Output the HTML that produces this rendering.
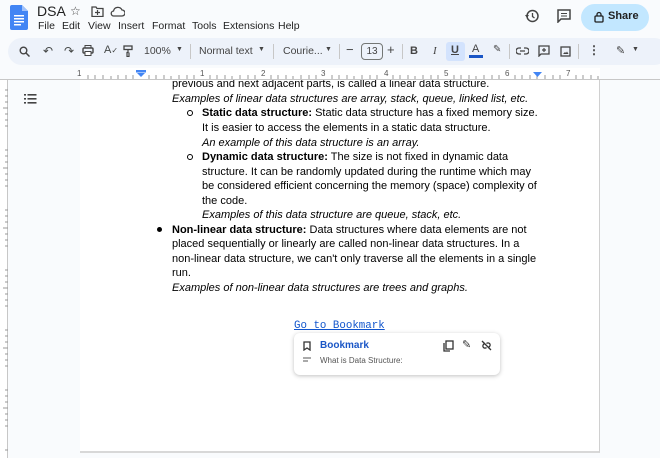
<!DOCTYPE html>
<html><head><meta charset="utf-8"><style>
*{margin:0;padding:0;box-sizing:border-box}
body{width:660px;height:458px;overflow:hidden;background:#f9fbfd;font-family:"Liberation Sans",Arial,sans-serif;position:relative;color:#1f1f1f}
.a{position:absolute;white-space:nowrap}
.tb{position:absolute;left:8px;top:38px;width:660px;height:27px;background:#edf2fa;border-radius:14px}
.ic{position:absolute;font-size:12px;color:#444746}
.doc{font-size:11px;color:#000;line-height:14.6px}
.i{font-style:italic}
.sep{position:absolute;top:44px;width:1px;height:15px;background:#c7c7c7}
.m{position:absolute;top:20px;font-size:10.5px;color:#1f1f1f}
</style></head><body>
<!-- header -->
<svg class="a" style="left:10px;top:5px" width="18" height="25" viewBox="0 0 18 25"><path d="M0 2a2 2 0 0 1 2-2h10l6 6v17a2 2 0 0 1-2 2H2a2 2 0 0 1-2-2z" fill="#4285f4"/><path d="M12 0v6h6z" fill="#a1c2fa"/><rect x="4" y="10" width="10" height="1.5" fill="#fff"/><rect x="4" y="13" width="10" height="1.5" fill="#fff"/><rect x="4" y="16" width="10" height="1.5" fill="#fff"/><rect x="4" y="19" width="7" height="1.5" fill="#fff"/></svg>
<div class="a" style="left:37px;top:3px;font-size:14px;color:#1f1f1f">DSA</div>
<div class="a" style="left:70px;top:4px;font-size:12px;color:#444">☆</div>
<svg class="a" style="left:91px;top:6px" width="13" height="11"><path d="M1 1h4l1 1.5h6v8H1z" fill="none" stroke="#444" stroke-width="1.3"/><path d="M6.5 4v5M4 6.5h5" stroke="#444" stroke-width="1.2"/></svg>
<svg class="a" style="left:110px;top:6px" width="15" height="11"><path d="M4 10h8a3 3 0 0 0 0-6 4.5 4.5 0 0 0-8.5 1A2.5 2.5 0 0 0 4 10z" fill="none" stroke="#444" stroke-width="1.3"/></svg>
<div class="m" style="left:38px">File</div>
<div class="m" style="left:62px">Edit</div>
<div class="m" style="left:88px">View</div>
<div class="m" style="left:118px">Insert</div>
<div class="m" style="left:152px">Format</div>
<div class="m" style="left:192px">Tools</div>
<div class="m" style="left:223px">Extensions</div>
<div class="m" style="left:278px">Help</div>
<svg class="a" style="left:525px;top:9px" width="14" height="14"><circle cx="7.5" cy="7" r="5.5" fill="none" stroke="#444" stroke-width="1.5"/><path d="M7.5 4v3.5l2 1.5" stroke="#444" stroke-width="1.3" fill="none"/><path d="M0 6l2 3 2-3z" fill="#444"/></svg>
<svg class="a" style="left:557px;top:9px" width="14" height="14"><path d="M1 1h12v9H4l-3 3z" fill="none" stroke="#444" stroke-width="1.5"/><path d="M4 4.5h6M4 7h6" stroke="#444"/></svg>
<div class="a" style="left:581px;top:4px;width:68px;height:27px;border-radius:14px;background:#c2e7ff"></div>
<svg class="a" style="left:594px;top:11px" width="10" height="12"><rect x="1" y="5" width="8" height="6" rx="1" fill="none" stroke="#1f1f1f" stroke-width="1.3"/><path d="M3 5V3.5a2 2 0 0 1 4 0V5" fill="none" stroke="#1f1f1f" stroke-width="1.3"/></svg>
<div class="a" style="left:608px;top:10px;font-size:11px;font-weight:bold;color:#1f1f1f">Share</div>
<!-- toolbar -->
<div class="tb"></div>
<svg class="a" style="left:19px;top:46px" width="11" height="11"><circle cx="4.5" cy="4.5" r="3.3" fill="none" stroke="#444" stroke-width="1.4"/><path d="M7 7l3.5 3.5" stroke="#444" stroke-width="1.5"/></svg>
<div class="ic a" style="left:43px;top:44px">↶</div>
<div class="ic a" style="left:64px;top:44px">↷</div>
<svg class="a" style="left:82px;top:45px" width="12" height="11"><rect x="1" y="3" width="10" height="5" rx="1" fill="none" stroke="#444" stroke-width="1.4"/><rect x="3" y="0.5" width="6" height="2.5" fill="none" stroke="#444"/><rect x="3" y="6.5" width="6" height="4" fill="#fff" stroke="#444"/></svg>
<div class="ic a" style="left:104px;top:44px;font-size:11px">A<span style="font-size:8px">✓</span></div>
<svg class="a" style="left:123px;top:45px" width="10" height="12"><rect x="1" y="1" width="8" height="3.5" fill="none" stroke="#444" stroke-width="1.3"/><path d="M5 4.5v3h-1v4h2v-4" fill="none" stroke="#444" stroke-width="1.2"/></svg>
<div class="a" style="left:144px;top:45px;font-size:10.5px;color:#444">100%</div>
<div class="a" style="left:176px;top:46px;font-size:7px;color:#444">▼</div>
<div class="sep" style="left:190px"></div>
<div class="a" style="left:199px;top:45px;font-size:10.5px;color:#444">Normal text</div>
<div class="a" style="left:258px;top:46px;font-size:7px;color:#444">▼</div>
<div class="sep" style="left:273px"></div>
<div class="a" style="left:283px;top:45px;font-size:10.5px;color:#444">Courie...</div>
<div class="a" style="left:325px;top:46px;font-size:7px;color:#444">▼</div>
<div class="sep" style="left:339px"></div>
<div class="a" style="left:346px;top:42px;font-size:13px;color:#444">−</div>
<div class="a" style="left:361px;top:43px;width:22px;height:17px;border:1px solid #747775;border-radius:4px;font-size:10px;text-align:center;line-height:15px;color:#444">13</div>
<div class="a" style="left:387px;top:42px;font-size:13px;color:#444">+</div>
<div class="sep" style="left:402px"></div>
<div class="a" style="left:410px;top:45px;font-size:11px;font-weight:bold;color:#444">B</div>
<div class="a" style="left:433px;top:45px;font-size:11px;font-style:italic;font-family:'Liberation Serif',serif;color:#444">I</div>
<div class="a" style="left:446px;top:42px;width:19px;height:19px;border-radius:3px;background:#d3e3fd"></div>
<div class="a" style="left:451px;top:44px;font-size:11px;text-decoration:underline;color:#444;font-weight:bold">U</div>
<div class="a" style="left:472px;top:43px;font-size:11px;color:#444">A</div>
<div class="a" style="left:469px;top:55px;width:14px;height:3px;background:#1a56c6"></div>
<div class="a" style="left:493px;top:44px;font-size:10px;color:#444">✎</div>
<div class="sep" style="left:509px"></div>
<svg class="a" style="left:516px;top:47px" width="13" height="8"><path d="M5 1H3a3 3 0 0 0 0 6h2M8 1h2a3 3 0 0 1 0 6H8M4 4h5" fill="none" stroke="#444" stroke-width="1.3"/></svg>
<svg class="a" style="left:538px;top:45px" width="12" height="12"><path d="M1 1h10v8H3l-2 2z" fill="none" stroke="#444" stroke-width="1.3"/><path d="M6 3v4M4 5h4" stroke="#444" stroke-width="1.2"/></svg>
<svg class="a" style="left:560px;top:46px" width="11" height="11"><rect x="1" y="1" width="9" height="9" fill="none" stroke="#444" stroke-width="1.3"/><path d="M3 8l2-2 1 1 1-1.5 1.5 2.5z" fill="#444"/></svg>
<div class="sep" style="left:578px"></div>
<div class="a" style="left:588px;top:43px;font-size:12px;color:#444;font-weight:bold">⋮</div>
<div class="a" style="left:616px;top:44px;font-size:11px;color:#444">✎</div>
<div class="a" style="left:632px;top:46px;font-size:7px;color:#444">▼</div>
<!-- ruler -->
<div class="a" style="left:0;top:79px;width:660px;height:1px;background:#c7c7c7"></div>
<div class="a" style="left:80px;top:68px;width:520px;height:11px;background:#fff"></div>
<div class="a" style="left:77px;top:69px;font-size:8px;color:#555">1</div>
<div class="a" style="left:200px;top:69px;font-size:8px;color:#555">1</div>
<div class="a" style="left:261px;top:69px;font-size:8px;color:#555">2</div>
<div class="a" style="left:321px;top:69px;font-size:8px;color:#555">3</div>
<div class="a" style="left:384px;top:69px;font-size:8px;color:#555">4</div>
<div class="a" style="left:444px;top:69px;font-size:8px;color:#555">5</div>
<div class="a" style="left:505px;top:69px;font-size:8px;color:#555">6</div>
<div class="a" style="left:566px;top:69px;font-size:8px;color:#555">7</div>
<svg class="a" style="left:80px;top:74px" width="520" height="5"><g stroke="#999" stroke-width="1"><path d="M8 1v4M15 1v4M23 1v4M31 2v3M38 1v4M46 1v4M53 1v4M69 1v4M76 1v4M84 1v4M91 2v3M99 1v4M107 1v4M114 1v4M130 1v4M137 1v4M145 1v4M152 2v3M160 1v4M168 1v4M175 1v4M191 1v4M198 1v4M206 1v4M213 2v3M221 1v4M229 1v4M236 1v4M252 1v4M259 1v4M267 1v4M274 2v3M282 1v4M290 1v4M297 1v4M313 1v4M320 1v4M328 1v4M335 2v3M343 1v4M351 1v4M358 1v4M374 1v4M381 1v4M389 1v4M396 2v3M404 1v4M412 1v4M419 1v4M435 1v4M442 1v4M450 1v4M457 2v3M465 1v4M473 1v4M480 1v4M496 1v4M503 1v4M511 1v4M518 2v3"/></g></svg>
<svg class="a" style="left:136px;top:70px" width="10" height="8"><rect x="0" y="0" width="10" height="2.5" fill="#4285f4"/><path d="M1 3h8l-4 4z" fill="#4285f4"/></svg>
<svg class="a" style="left:533px;top:72px" width="9" height="6"><path d="M0 0h9l-4.5 5z" fill="#4285f4"/></svg>
<!-- vertical ruler -->
<div class="a" style="left:0;top:80px;width:8px;height:378px;background:#fff;border-right:1px solid #c7c7c7"></div>
<svg class="a" style="left:2px;top:84px" width="6" height="374"><g stroke="#999"><path d="M3 6h3M3 12h3M3 18h3M1 24h5M3 30h3M3 36h3M3 42h3M3 66h3M3 72h3M3 78h3M1 84h5M3 90h3M3 96h3M3 102h3M3 126h3M3 132h3M3 138h3M1 144h5M3 150h3M3 156h3M3 162h3M3 186h3M3 192h3M3 198h3M1 204h5M3 210h3M3 216h3M3 222h3M3 246h3M3 252h3M3 258h3M1 264h5M3 270h3M3 276h3M3 282h3M3 306h3M3 312h3M3 318h3M1 324h5M3 330h3M3 336h3M3 342h3M3 366h3"/></g></svg>
<!-- outline icon -->
<svg class="a" style="left:24px;top:94px" width="13" height="10"><g fill="#444"><rect x="0" y="0" width="2" height="1.6"/><rect x="0" y="4" width="2" height="1.6"/><rect x="0" y="8" width="2" height="1.6"/><rect x="3.5" y="0" width="9" height="1.6"/><rect x="3.5" y="4" width="9" height="1.6"/><rect x="3.5" y="8" width="9" height="1.6"/></g></svg>
<!-- page -->
<div class="a" style="left:80px;top:80px;width:520px;height:373px;background:#fff;border-right:1px solid #d0d0d0;border-bottom:2px solid #d8d8d8"></div>
<div class="a" style="left:80px;top:80px;width:520px;height:1px;"></div>
<div style="position:absolute;left:80px;top:80px;width:520px;height:20px;overflow:hidden">
<div class="a doc" style="left:92px;top:-3px">previous and next adjacent parts, is called a linear data structure.</div>
</div>
<div class="a doc i" style="left:172px;top:92px">Examples of linear data structures are array, stack, queue, linked list, etc.</div>
<div class="a" style="left:187px;top:110px;width:6px;height:6px;border:1px solid #000;border-radius:50%"></div>
<div class="a doc" style="left:202px;top:106px"><b>Static data structure:</b> Static data structure has a fixed memory size.</div>
<div class="a doc" style="left:202px;top:121px">It is easier to access the elements in a static data structure.</div>
<div class="a doc i" style="left:202px;top:136px">An example of this data structure is an array.</div>
<div class="a" style="left:187px;top:154px;width:6px;height:6px;border:1px solid #000;border-radius:50%"></div>
<div class="a doc" style="left:202px;top:150px"><b>Dynamic data structure:</b> The size is not fixed in dynamic data</div>
<div class="a doc" style="left:202px;top:165px">structure. It can be randomly updated during the runtime which may</div>
<div class="a doc" style="left:202px;top:179px">be considered efficient concerning the memory (space) complexity of</div>
<div class="a doc" style="left:202px;top:194px">the code.</div>
<div class="a doc i" style="left:202px;top:208px">Examples of this data structure are queue, stack, etc.</div>
<div class="a" style="left:157px;top:227px;width:5px;height:5px;background:#000;border-radius:50%"></div>
<div class="a doc" style="left:172px;top:223px"><b>Non-linear data structure:</b> Data structures where data elements are not</div>
<div class="a doc" style="left:172px;top:237px">placed sequentially or linearly are called non-linear data structures. In a</div>
<div class="a doc" style="left:172px;top:252px">non-linear data structure, we can't only traverse all the elements in a single</div>
<div class="a doc" style="left:172px;top:266px">run.</div>
<div class="a doc i" style="left:172px;top:281px">Examples of non-linear data structures are trees and graphs.</div>
<div class="a" style="left:294px;top:320px;font-family:'Liberation Mono',monospace;font-size:10.8px;color:#1155cc;text-decoration:underline">Go to Bookmark</div>
<div class="a" style="left:294px;top:333px;width:206px;height:42px;background:#fff;border-radius:6px;box-shadow:0 1px 4px rgba(0,0,0,.25)"></div>
<svg class="a" style="left:303px;top:341px" width="8" height="10"><path d="M1 1h6v8L4 7 1 9z" fill="none" stroke="#333" stroke-width="1.3"/></svg>
<div class="a" style="left:320px;top:340px;font-size:10px;color:#1a56c6;font-weight:bold">Bookmark</div>
<svg class="a" style="left:303px;top:357px" width="9" height="5"><path d="M0 1h8M0 4h5" stroke="#555" stroke-width="1"/></svg>
<div class="a" style="left:320px;top:356px;font-size:8px;color:#555">What is Data Structure:</div>
<svg class="a" style="left:443px;top:340px" width="11" height="12"><rect x="3" y="1" width="7" height="8" fill="none" stroke="#333" stroke-width="1.3"/><path d="M1 3v8h6" fill="none" stroke="#333" stroke-width="1.3"/></svg>
<div class="a" style="left:462px;top:338px;font-size:11px;color:#333">✎</div>
<svg class="a" style="left:481px;top:340px" width="11" height="11"><path d="M4 3L2.5 4.5a2 2 0 0 0 3 3M7 8l1.5-1.5a2 2 0 0 0-3-3M1 1l9 9" fill="none" stroke="#333" stroke-width="1.3"/></svg>
</body></html>
